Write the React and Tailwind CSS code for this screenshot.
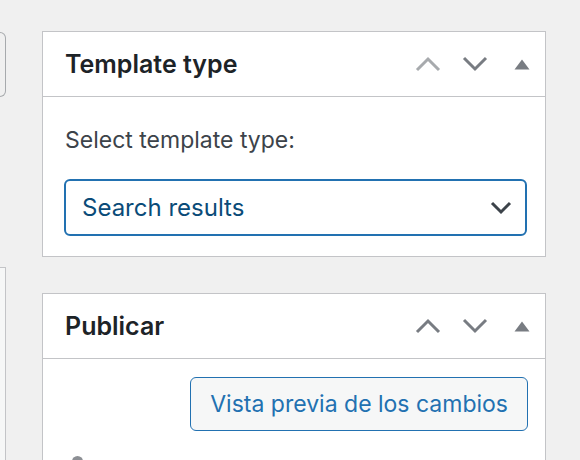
import React from "react";

const ChevronUp = ({ color }) => (
  <svg width="26" height="16" viewBox="0 0 26 16" fill="none">
    <polyline points="2,14 13,3 24,14" stroke={color} strokeWidth="3" />
  </svg>
);

const ChevronDown = ({ color }) => (
  <svg width="26" height="16" viewBox="0 0 26 16" fill="none">
    <polyline points="2,2 13,13 24,2" stroke={color} strokeWidth="3" />
  </svg>
);

const Triangle = () => (
  <svg width="16" height="11" viewBox="0 0 16 11">
    <polygon points="0.5,10.5 8,0.5 15.5,10.5" fill="#787c82" />
  </svg>
);

function PanelHeader({ title, upDisabled }) {
  return (
    <div className="flex h-[65px] items-center justify-between border-b border-[#c3c4c7]">
      <h2 className="pl-[22px] text-[25px] leading-[30px] font-semibold text-[#1d2327]">{title}</h2>
      <div className="flex items-center">
        <div className="flex w-[47px] justify-center">
          <ChevronUp color={upDisabled ? "#a7aaad" : "#787c82"} />
        </div>
        <div className="flex w-[47px] justify-center">
          <ChevronDown color="#787c82" />
        </div>
        <div className="flex w-[47px] justify-center">
          <Triangle />
        </div>
      </div>
    </div>
  );
}

function App() {
  return (
    <div
      className="flex h-[460px] w-[580px] overflow-hidden bg-[#f0f0f0] pt-[31px]"
      style={{ fontFamily: "Inter, 'Noto Sans', sans-serif" }}
    >
      <div className="flex w-[42px] flex-col">
        <div className="mt-px h-[67px] w-[6px] rounded-r-[6px] border-y border-r border-[#a7aaad]" />
        <div className="mt-[170px] h-[200px] w-[6px] border-t border-r border-[#c3c4c7] bg-[#f6f7f7]" />
      </div>

      <div className="flex w-[504px] flex-col">
        <div className="border border-[#c3c4c7] bg-white">
          <PanelHeader title="Template type" upDisabled />
          <div className="pl-[21px] pr-[18px] pt-[28px] pb-[20px]">
            <p className="pl-px text-[23px] leading-[30px] text-[#3c434a]">Select template type:</p>
            <div className="mt-[24px] flex h-[57px] items-center justify-between rounded-[6px] border-2 border-[#2271b1] pl-[16px] pr-[13px]">
              <span className="text-[24px] text-[#0a4b78]">Search results</span>
              <svg width="22" height="14" viewBox="0 0 22 14" fill="none">
                <polyline points="2,2 11,11 20,2" stroke="#3c434a" strokeWidth="3" />
              </svg>
            </div>
          </div>
        </div>

        <div className="mt-[36px] border border-[#c3c4c7] bg-white">
          <PanelHeader title="Publicar" />
          <div className="flex justify-end pt-[18px] pr-[17px]">
            <button className="h-[54px] rounded-[6px] border border-[#2271b1] bg-[#f6f7f7] px-[19px] text-[23px] text-[#2271b1]">
              Vista previa de los cambios
            </button>
          </div>
          <div className="mt-[25px] pl-[29px]">
            <div className="h-[12px] w-[11px] rounded-full bg-[#8c8f94]" />
          </div>
        </div>
      </div>
    </div>
  );
}

export default App;
